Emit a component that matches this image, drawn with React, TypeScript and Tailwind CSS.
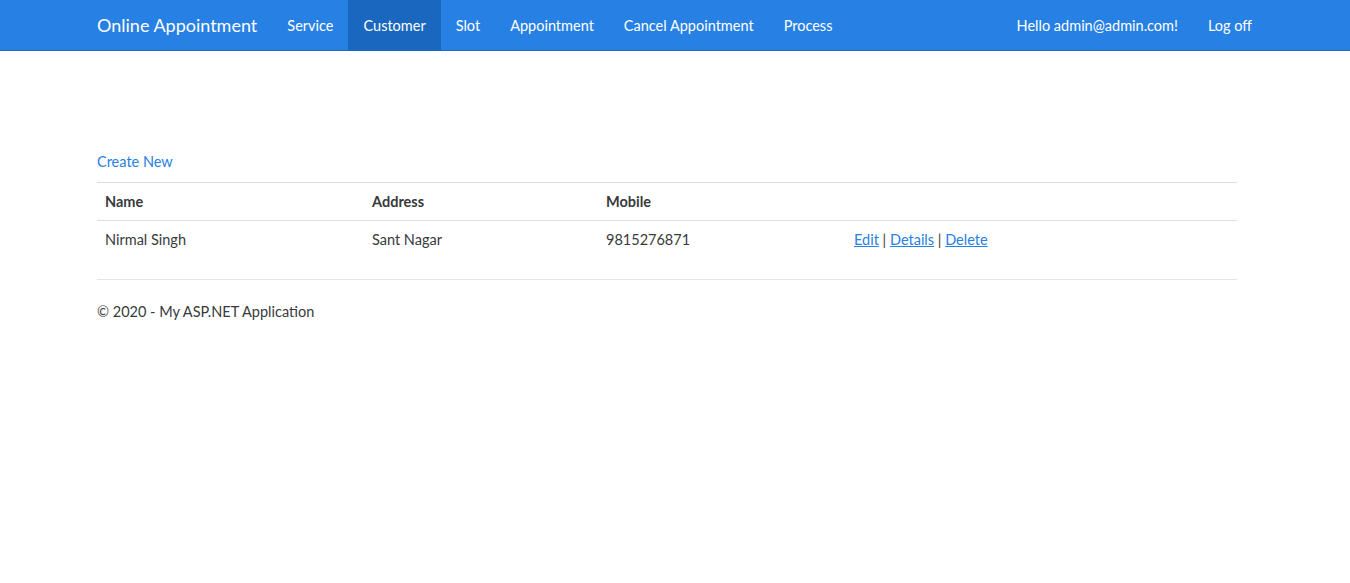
import React from 'react';

const navLinks = [
  { label: 'Service', active: false },
  { label: 'Customer', active: true },
  { label: 'Slot', active: false },
  { label: 'Appointment', active: false },
  { label: 'Cancel Appointment', active: false },
  { label: 'Process', active: false },
];

const customers = [{ name: 'Nirmal Singh', address: 'Sant Nagar', mobile: '9815276871' }];

const App = () => {
  return (
    <div className="min-h-screen bg-white text-[14.5px] leading-[21px] text-[#373a3c] font-['Lato','Liberation_Sans',sans-serif]">
      <nav className="h-[51px] bg-[#2780e3] border-b border-[#1967be]">
        <div className="w-[1170px] ml-[82px] px-[15px] flex h-[50px] items-stretch">
          <a className="flex items-center pr-[15px] text-[18px] text-white">Online Appointment</a>
          <ul className="flex">
            {navLinks.map((link) => (
              <li key={link.label}>
                <a
                  className={`flex h-[50px] items-center px-[15px] text-white ${link.active ? 'bg-[#1967be]' : ''}`}
                >
                  {link.label}
                </a>
              </li>
            ))}
          </ul>
          <ul className="ml-auto flex mr-[-15px]">
            <li>
              <a className="flex h-[50px] items-center px-[15px] text-white">Hello admin@admin.com!</a>
            </li>
            <li>
              <a className="flex h-[50px] items-center pl-[15px] text-white">Log off</a>
            </li>
          </ul>
        </div>
      </nav>

      <main className="w-[1140px] ml-[97px]">
        <p className="pt-[100px] mb-[10px]">
          <a className="text-[#2780e3]">Create New</a>
        </p>
        <table className="w-full border-collapse mb-[21px]">
          <thead>
            <tr className="border-t border-b border-[#dddddd]">
              <th className="w-[267px] p-2 text-left font-bold">Name</th>
              <th className="w-[234px] p-2 text-left font-bold">Address</th>
              <th className="w-[248px] p-2 text-left font-bold">Mobile</th>
              <th className="p-2"></th>
            </tr>
          </thead>
          <tbody>
            {customers.map((c) => (
              <tr key={c.mobile}>
                <td className="p-2">{c.name}</td>
                <td className="p-2">{c.address}</td>
                <td className="p-2">{c.mobile}</td>
                <td className="p-2">
                  <a className="text-[#2780e3] underline">Edit</a> |{' '}
                  <a className="text-[#2780e3] underline">Details</a> |{' '}
                  <a className="text-[#2780e3] underline">Delete</a>
                </td>
              </tr>
            ))}
          </tbody>
        </table>
        <hr className="border-t border-[#e5e5e5]" />
        <footer className="mt-[21px]">
          <p>&copy; 2020 - My ASP.NET Application</p>
        </footer>
      </main>
    </div>
  );
};

export default App;
